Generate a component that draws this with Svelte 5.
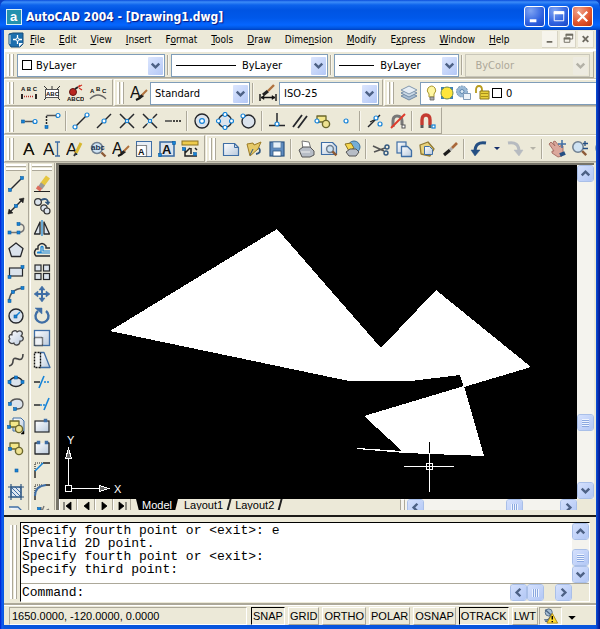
<script>
  const BLUE = '#1583d8';
  const INK = '#26282c';
  const SLATE = '#3f6ea5';
  const STEEL = '#dbe3ec';

  // small builders for the 18x18 toolbar glyphs
  const ln = (d, color = INK, w = 1.5, extra = '') =>
    `<path d="${d}" fill="none" stroke="${color}" stroke-width="${w}" ${extra}/>`;
  const area = (d, fill = STEEL, color = INK, w = 1.3) =>
    `<path d="${d}" fill="${fill}" stroke="${color}" stroke-width="${w}" stroke-linejoin="round"/>`;
  const dot = (x, y) => `<rect x="${x - 1.5}" y="${y - 1.5}" width="3" height="3" fill="${BLUE}" stroke="#0f5c9e" stroke-width=".6"/>`;
  const ring = (x, y, r = 2) => `<circle cx="${x}" cy="${y}" r="${r}" fill="#fff" stroke="${BLUE}" stroke-width="1.2"/>`;
  const circ = (x, y, r, fill = STEEL, color = INK, w = 1.4) =>
    `<circle cx="${x}" cy="${y}" r="${r}" fill="${fill}" stroke="${color}" stroke-width="${w}"/>`;
  const box = (x, y, w, h, fill = STEEL, color = INK, sw = 1.2, extra = '') =>
    `<rect x="${x}" y="${y}" width="${w}" height="${h}" fill="${fill}" stroke="${color}" stroke-width="${sw}" ${extra}/>`;
  const txt = (t, x, y, size, color = '#111', weight = 'bold') =>
    `<text x="${x}" y="${y}" font-size="${size}" font-weight="${weight}" font-family="Liberation Sans, sans-serif" fill="${color}">${t}</text>`;
  const brush = ln('M9 14l4-3', '#222', 3) + ln('M12 11l5-5', '#b0713d', 2) + ln('M6 16l4-2', '#111', 2);
  const lens = (x, y, r) => circ(x, y, r, '#cfe3f3', '#6f7f90', 1.5) + ln(`M${x + r - 1} ${y + r - 1}l4 4`, '#8c5a36', 2.4);
  const blocks = area('M3 4h9v6h-9z', '#f3e789', '#6b672c') + circ(12, 12, 3.6, '#eee291', '#6b672c');

  const icons = {
    textAbove: txt('A B C', 1, 7, 6) + ln('M2 10v5M16 10v5', '#111', 1.8) + ln('M4 12.500h10', '#b8312c', 1.5, 'stroke-dasharray="1 1"'),
    textMask: ln('M1 2l3 3M17 2l-3 3M1 16l3-3M17 16l-3-3M9 2v3', '#333', 1) + box(2.5, 5.5, 13, 8, '#fff', '#555', 1) + txt('ABC', 3, 12, 6),
    textBomb: circ(7, 8, 3.5, '#b92620', '#631713', 1) + ln('M9 5l3-2', '#222', 2) + ln('M12 3l4-2M13 4l3 2M13 1l1 2', '#d32f20', 1.2) + txt('ABCD', 1, 17, 6),
    textArc: ln('M1 15q8-8 16 0', '#666', 1.4) + txt('A', 1, 9, 6) + txt('B', 7, 7, 6) + txt('C', 13, 9, 6),
    textStyle: txt('A', 0, 14, 16, '#111', 'normal') + brush,
    dimStyle: ln('M1 10v7M17 10v7M2 13.500h14', '#111', 1.4) + area('M2 13.500l3-2v4zM16 13.500l-3-2v4z', '#111', '#111', .5) + ln('M4 11l5-4', '#222', 3) + ln('M9 7l6-6', '#b0713d', 2.4),
    layers: area('M1 12l8-4 8 4-8 4z', '#a9bed3', '#718aa5', 1) + area('M1 9l8-4 8 4-8 4z', '#cbd9e6', '#718aa5', 1) + area('M1 6l8-4 8 4-8 4z', '#e7eef5', '#8197ae', 1),

    trackPoint: dot(3, 9.500) + ln('M5 9.500h8', '#555') + ring(15, 9.500),
    snapFrom: ring(15, 3.500) + ln('M13 3.500h-9.500', '#555') + ln('M3.500 4v9', '#222', 1.5, 'stroke-dasharray="2 1"') + dot(3.500, 15),
    snapEnd: ln('M4 14l10-10') + ring(3, 15) + ring(15, 3),
    snapMid: ln('M2 16l14-14') + ring(9, 9),
    snapCross: ln('M2 2l14 14M2 16l14-14') + ring(9, 9, 1.6),
    snapApparent: ln('M2 2l14 14M2 16l4-4M12 6l4-4') + ln('M6 12l6-6', BLUE, 1, 'stroke-dasharray="2 1"') + ring(9, 9, 1.6),
    snapExt: ln('M1 9h7', '#444') + ln('M9 9h8', '#111', 1.5, 'stroke-dasharray="2 1"'),
    snapCenter: circ(9, 9, 7) + ring(9, 9, 2.4),
    snapQuad: circ(9, 9, 6.5) + ring(9, 2.500) + ring(9, 15.500) + ring(2.500, 9) + ring(15.500, 9),
    snapTan: circ(9.500, 9.500, 6.5) + ring(4, 4),
    snapPerp: ln('M9 1v12M1 13.500h16') + ring(9, 12),
    snapPar: ln('M2 15l9-12M7 16l9-12', INK, 1.8),
    snapInsert: blocks + ring(3, 9),
    snapNode: ring(9, 9),
    snapNear: ln('M2 15l12-12') + ln('M10 7l-6 3', '#222', 1.2) + ring(10, 6) + ring(14, 12),
    snapNone: ln('M4 15v-6q0-5 4-5 5 0 5 5v4', '#777', 3) + ln('M2 16l14-14', '#df3c2c', 2) + box(13, 13, 3, 3, '#fff', '#555', 1),
    snapSettings: ln('M4 13v-5q0-5 4-5 4 0 4 5v5', '#c43a30', 3.4) + ln('M4 13v3M12 13v3', '#555', 3) + box(14, 13, 3, 3, '#fff', BLUE, 1.2),

    textMulti: txt('A', 3, 15, 17, '#111', 'normal') + ln('M4 15l5-11 5 11', '#111', 1),
    textSingle: txt('A', 0, 15, 17, '#111', 'normal') + ln('M14.500 2v14M12 2h5M12 16h5', SLATE, 1.3),
    textEdit: txt('A', 0, 15, 17, '#111', 'normal') + ln('M10 13l5-10', '#d8b830', 3) + ln('M8 16l2-3', '#333', 2),
    textFind: lens(8, 8, 5.5) + txt('abc', 2, 10, 8, '#1b3350'),
    textScale: box(1.5, 1.5, 15, 15, '#e7edf4', SLATE, 1) + box(1.5, 5.5, 10, 11, '#fff', '#222', 1.2, 'stroke-dasharray="1 1"') + txt('A', 3, 15, 9),
    textJustify: box(2, 2, 14, 14, STEEL, SLATE, 1.6) + txt('A', 4, 14, 13) + dot(2, 15) + dot(16, 3),
    textSpace: box(1, 1, 16, 4, '#eecb4c', '#8b7220', 1) + ln('M4 8v8h12M4 13l5-5M10 8v6M14 8l2 2', '#222', 1.5) + dot(3, 9) + dot(14, 14),

    newFile: area('M1.500 3.500h11l4 4v8h-15z', 'url(#sheen)', SLATE, 1.2) + ln('M12.500 3.500v4h4', SLATE, 1),
    open: area('M2 4l6-1 1 2 7-3-3 7-8 7z', '#e5c968', '#9b7b27', 1) + ln('M14 8q3 5-3 6', '#31577f', 1.8) + ln('M8 9l-3 6', '#31577f', 1),
    save: box(2, 2, 14, 14, '#5f8cc0', '#2e5683') + box(5, 2, 8, 6, '#e7f1f8', '#5b7fa6', .8) + box(5, 11, 8, 5, '#fff', '#31577f', .8),
    print: area('M5 1l7 1 2 7-8 1z', '#fff', '#777', 1) + area('M2 10l4-3h7l4 4v4l-4 2h-8z', '#b7bdc6', '#555', 1) + ln('M4 12h9', '#eee', 1),
    preview: area('M1.500 2.500h11l4 4v8h-15z', 'url(#sheen)', SLATE, 1.2) + lens(10, 9, 3.4),
    publish: circ(11, 7, 6, '#75add6', '#396f9d', 1) + area('M2 4l6-1 3 5-5 3z', '#f5d64e', '#8b7220', 1) + area('M3 12l4-3h6l3 3-3 4h-7z', '#b7bdc6', '#555', 1),
    cut: ln('M1 6l11 5M2 12l11-4', '#555', 1.6) + circ(15, 7, 2, 'none', '#31577f', 1.4) + circ(14, 13, 2, 'none', '#31577f', 1.4),
    copy: box(2, 2, 9, 11, 'url(#sheen)', SLATE) + area('M6.500 6.500h6l4 4v6h-10z', 'url(#sheen)', SLATE),
    paste: area('M2 5l8-3 6 7-4 7-9-2z', '#e8d27c', '#8f7934') + area('M6.500 6.500h5l3 3v5h-8z', 'url(#sheen)', SLATE, 1),
    match: ln('M3 15l6-5', '#1c1c1c', 3.2) + ln('M9 10l2-2', '#aaa', 3) + ln('M11 8l5-5', '#a9673a', 2.6),
    undo: ln('M16 3q-11-2-11 9', '#254f83', 3) + area('M1 10h9l-5 6z', '#254f83', '#254f83', .5),
    redo: ln('M2 3q11-2 11 9', '#b7bbc0', 3) + area('M8 10h9l-4 6z', '#b7bbc0', '#b7bbc0', .5),
    pan: area('M1 4l2-2 4 4-2-4 2-1 5 6 1-2 2 1 0 6-1 4-4 1-6-4 0-2 2 0z', '#dba79b', '#a16a60', .9) + ln('M12 15l5-2', '#254f83', 4) + ln('M14 0v8M10 4h8', SLATE, 1.5),
    zoomRt: lens(7, 7, 5.2) + ln('M14 1v5M12 3.500h5M12 8.500h5', '#254f83', 1.3),
    zoomWin: lens(8, 8, 6) + box(5, 5, 6, 5, '#fff', SLATE, 1),

    line: ln('M4 14l10-10') + dot(3, 15) + dot(15, 3),
    xline: ln('M3 15l12-12') + area('M1 17l1-5 4 4zM17 1l-1 5-4-4z', '#222', '#222', .5) + dot(9, 9),
    pline: ln('M2 13.500h9M12 5q5 0 5 4t-5 4.500', '#777') + dot(2.500, 13.500) + dot(11.500, 13.500) + dot(11.500, 5),
    polygon: area('M9 2l7 5.500-2.500 8h-9l-2.500-8z'),
    rect: box(2.5, 5, 13, 8) + dot(2.500, 14) + dot(15.500, 4),
    arc: ln('M2 16q1-12 14-13', '#555') + dot(2.500, 16) + dot(6, 7) + dot(15.500, 3),
    circle: circ(9, 9, 7) + ln('M9 9l4-4', BLUE, 1.5) + dot(8.500, 9.500),
    cloud: area('M5 6c-1-5 5-5 5-3 4-3 7 1 4 4 4 1 2 6-1 5 0 5-6 5-6 2-4 2-7-3-4-4-2-3 0-5 2-4z', 'url(#sheen)', '#444'),
    spline: ln('M2 15q4-1 4-5t5-2 5-5', '#444', 1.6),
    ellipse: `<ellipse cx="9" cy="9" rx="6.5" ry="4.500" fill="${STEEL}" stroke="${INK}" stroke-width="1.4"/>` + dot(9, 4.500) + dot(2.500, 9) + dot(15.500, 9),
    ellipseArc: area('M3 8q2-4 7-4 6 0 6 5t-6 5h-1', STEEL, '#555') + dot(3, 9) + dot(8, 14),
    insertBlock: area('M6 1h8l3 3v10h-11z', 'url(#sheen)', SLATE, 1) + blocks + dot(2, 10) + area('M17 14v3h-3z', '#000', '#000', .5),
    makeBlock: blocks + dot(3, 10),
    point: dot(9.500, 9.500),
    hatch: box(4, 4, 10, 10, '#dfe7f0', SLATE) + ln('M4 8l6 6M4 4l10 10M8 4l6 6M12 4l2 2', SLATE, 1) + ln('M4 1v16M14 1v16M1 4h16M1 14h16', '#31577f', 1.2),
    region: area('M2 2h9l4 4v10', 'url(#sheen)', SLATE) + circ(6, 15, 4, '#fff', SLATE),

    erase: ln('M9 10l6-8', '#e6c63f', 5) + ln('M7 13l3-4', '#999', 5) + ln('M5 15l2-3', '#dd6d5d', 5) + ln('M1 16.500h16', '#222', 1.2),
    copyObj: circ(5, 5, 3.4, STEEL, '#333', 1.2) + circ(11, 11, 3.2, STEEL, '#333', 1.2) + circ(14, 14, 3, STEEL, '#333', 1.2) + ln('M8 3q7-3 7 3', '#31577f', 1.8) + area('M12 5h5l-2 3z', '#31577f', '#31577f', .5),
    mirror: area('M7 3v12h-5.500z') + area('M11 3v12h5.500z') + ln('M9 1v16', BLUE, 1.2),
    offset: ln('M17 7h-4v-2q-4-5-8 0v3h-2q-3 4 0 7h14', INK, 1.4) + ln('M17 10h-7v-4q-1-1-2 0v5h-3q-1 1 0 1h12', BLUE, 1.2),
    array: box(2, 2, 6, 6) + box(10.5, 2, 6, 6) + box(2, 10.5, 6, 6) + box(10.5, 10.5, 6, 6),
    move: ln('M9 3v12M3 9h12', SLATE, 2) + area('M9 1l3 4h-6zM9 17l3-4h-6zM1 9l4-3v6zM17 9l-4-3v6z', SLATE, SLATE, .5),
    rotate: ln('M5 4a6.500 6.500 0 1 0 8 0', SLATE, 2.4) + area('M2 1h7v6z', SLATE, SLATE, .5),
    scale: box(1.5, 1.5, 15, 15, 'url(#sheen)', SLATE, 1.3) + box(1.5, 8.5, 8, 8, '#eef2f7', '#111', 1.4, 'stroke-dasharray="1 1"'),
    stretch: area('M7 1.500h4l6 15h-10z', 'url(#sheen)', SLATE) + box(1.5, 1.5, 6, 15, '#f4f5f2', '#111', 1.4, 'stroke-dasharray="2 1"'),
    trim: ln('M1 9h6') + ln('M11 9h6', BLUE, 1.5, 'stroke-dasharray="2 1"') + ln('M6 15l5-12', BLUE, 1.6),
    extend: ln('M1 10h6') + ln('M7 10h6', BLUE, 1.5, 'stroke-dasharray="2 1"') + ln('M11 15l5-12', BLUE, 1.6),
    breakPoint: box(2, 4, 14, 11, 'url(#sheen)') + box(11, 2, 3, 3, SLATE, SLATE, .5),
    breakGap: area('M5 4h-3v11h14v-11h-3', 'url(#sheen)') + box(4, 2, 3, 3, SLATE, SLATE, .5) + box(12, 2, 3, 3, SLATE, SLATE, .5),
    chamfer: ln('M2 17v-7M10 2h7', '#222', 1.4) + ln('M2 10v-8h8', '#222', 1.2, 'stroke-dasharray="1 1"') + ln('M2 10l8-8', BLUE, 1.6),
    fillet: ln('M2 17v-5M12 2h5', '#222', 1.4) + ln('M2 10v-8h8', '#222', 1.2, 'stroke-dasharray="1 1"') + ln('M2 13q0-10 11-11', SLATE, 2),
    explode: ln('M3 10l5-6', '#333', 3) + ln('M9 6l2-5M11 7l5-3M8 5v-3', '#777', 1.4) + dot(6, 4)
  };

  const menus = [
    ['', 'F', 'ile'], ['', 'E', 'dit'], ['', 'V', 'iew'], ['', 'I', 'nsert'], ['F', 'o', 'rmat'], ['', 'T', 'ools'],
    ['', 'D', 'raw'], ['Dime', 'n', 'sion'], ['', 'M', 'odify'], ['E', 'x', 'press'], ['', 'W', 'indow'], ['', 'H', 'elp']
  ];

  // '|' marks a separator, 'v' a drop arrow, 'x' a greyed one
  const bonusText = ['textAbove', 'textMask', 'textBomb', 'textArc'];
  const snaps = ['trackPoint', 'snapFrom', '|', 'snapEnd', 'snapMid', 'snapCross', 'snapApparent', 'snapExt', '|',
    'snapCenter', 'snapQuad', 'snapTan', '|', 'snapPerp', 'snapPar', 'snapInsert', 'snapNode', '|',
    'snapNear', 'snapNone', '|', 'snapSettings'];
  const textTools = ['textMulti', 'textSingle', 'textEdit', 'textFind', 'textStyle', 'textScale', 'textJustify', 'textSpace'];
  const standard = ['newFile', 'open', 'save', '|', 'print', 'preview', 'publish', '|', 'cut', 'copy', 'paste', 'match', '|',
    'undo', 'v', 'redo', 'x', '|', 'pan', 'zoomRt', 'zoomWin'];
  const drawTools = ['line', 'xline', 'pline', 'polygon', 'rect', 'arc', 'circle', 'cloud', 'spline', 'ellipse', 'ellipseArc',
    'insertBlock', 'makeBlock', 'point', 'hatch', 'region'];
  const modifyTools = ['erase', 'copyObj', 'mirror', 'offset', 'array', 'move', 'rotate', 'scale', 'stretch', 'trim', 'extend',
    'breakPoint', 'breakGap', 'chamfer', 'fillet', 'explode'];

  const log = 'Specify fourth point or <exit>: e\nInvalid 2D point.\nSpecify fourth point or <exit>:\nSpecify third point:';

  const arrows = { up: 'M4 10l4-4 4 4', down: 'M4 6l4 4 4-4', left: 'M10 4l-4 4 4 4', right: 'M6 4l4 4-4 4' };
  const tabNav = [
    ['First', 'M3 3v8M10 3v8l-5-4z'], ['Previous', 'M10 3v8l-5-4z'],
    ['Next', 'M5 3v8l5-4z'], ['Last', 'M4 3v8l5-4zM11 3v8']
  ];

  let modes = $state([
    { name: 'SNAP', on: true }, { name: 'GRID', on: false }, { name: 'ORTHO', on: false }, { name: 'POLAR', on: false },
    { name: 'OSNAP', on: false }, { name: 'OTRACK', on: true }, { name: 'LWT', on: false }
  ]);
  let layout = $state('Model');
  let command = $state('');
</script>

{#snippet tool(name)}
  {#if name === '|'}
    <span class="sep"></span>
  {:else if name === 'v' || name === 'x'}
    <button class="drop" aria-label="More" disabled={name === 'x'}><svg viewBox="0 0 6 4"><path d="M0 0h6l-3 3z" /></svg></button>
  {:else}
    <button class="tool" aria-label={name}>
      <svg viewBox="0 0 18 18">{@html icons[name]}</svg>
    </button>
  {/if}
{/snippet}

{#snippet combo(label, value, kind, disabled = false)}
  <label class="combo {kind}" class:disabled>
    {#if kind === 'color'}<span class="swatch"></span>{/if}
    {#if kind === 'linetype' || kind === 'weight'}<span class="rule"></span>{/if}
    {#if kind === 'layer'}
      <svg class="states" viewBox="0 0 66 18" aria-hidden="true">
        <path d="M4 10q-3-3-1-6 4-4 7 0 2 3-1 6v3h-5z" fill="#fff6a0" stroke="#a99632" />
        <path d="M5 13h4v3h-4z" fill="#aaa" stroke="#666" stroke-width=".8" />
        <path d="M16 3h3v3h-3zM25 3h3v3h-3zM16 12h3v3h-3zM25 12h3v3h-3z" fill="#3a7fbe" />
        <circle cx="22" cy="9" r="6" fill="#ffe53b" stroke="#6f8a4a" />
        <circle cx="37" cy="7.500" r="5.500" fill="#9ab9d6" stroke="#6f91b3" stroke-dasharray="2 1" />
        <circle cx="37" cy="7.500" r="2" fill="#dce9f3" stroke="#5f88b0" />
        <path d="M38.500 9.500h7v6h-7z" fill="#edf3f8" stroke="#7f9bb8" />
        <path d="M51 9v-3q0-4 3-4t3 4v4" fill="none" stroke="#b79b1c" stroke-width="1.800" />
        <path d="M55 7h9v8h-9z" fill="#e8d03b" stroke="#8b7718" />
        <path d="M56 9.500h7M56 12.500h7" stroke="#a98f1c" />
      </svg>
      <span class="swatch"></span>
    {/if}
    <select aria-label={label} {disabled}><option>{value}</option></select>
    <span class="chevron"><svg viewBox="0 0 16 16"><path d={arrows.down} /></svg></span>
  </label>
{/snippet}

{#snippet arrow(dir)}
  <button class="sb" aria-label="Scroll {dir}"><svg viewBox="0 0 16 16"><path d={arrows[dir]} /></svg></button>
{/snippet}

<svg class="defs" aria-hidden="true">
  <defs>
    <linearGradient id="sheen" x1="0" y1="0" x2="1" y2="1">
      <stop offset="0" stop-color="#fff" />
      <stop offset="1" stop-color="#b9c9dc" />
    </linearGradient>
  </defs>
</svg>

<div class="window">
  <header class="title-bar">
    <svg class="app-icon" viewBox="0 0 16 16">
      <rect x=".5" y=".5" width="15" height="15" fill="#2492ae" stroke="#d9f1f6" />
      <text x="4" y="12" font-size="13" font-weight="bold" fill="#fff">a</text>
    </svg>
    <h1>AutoCAD 2004 - [Drawing1.dwg]</h1>
    <button class="cap" aria-label="Minimize"><svg viewBox="0 0 20 20"><path d="M5 14.500h7" stroke-width="3" /></svg></button>
    <button class="cap" aria-label="Maximize"><svg viewBox="0 0 20 20"><path d="M5.500 5v9.500h10v-9.500z" stroke-width="1" /><path d="M5 6h11" stroke-width="3" /></svg></button>
    <button class="cap close" aria-label="Close"><svg viewBox="0 0 20 20"><path d="M5 5l10 10M15 5l-10 10" stroke-width="2.400" /></svg></button>
  </header>

  <div class="client">
    <nav class="menu-bar">
      <svg class="doc-icon" viewBox="0 0 16 16">
        <path d="M1 2l4-1h10v11l-3 3h-9l-2-3z" fill="#1c6fae" stroke="#174d79" />
        <path d="M2 3v9" stroke="#79a8c8" stroke-width="2" />
        <path d="M9.500 3v9M5 7.500h9" stroke="#fff" stroke-width="1.300" />
        <circle cx="9.500" cy="7.500" r="1.500" fill="#1c6fae" stroke="#fff" />
        <path d="M15 11l-4 4v-4z" fill="#fff" />
      </svg>
      {#each menus as [pre, key, post]}
        <button class="menu">{pre}<u>{key}</u>{post}</button>
      {/each}
      <span class="mdi">
        <button aria-label="Minimize drawing"><svg viewBox="0 0 16 16"><path d="M5 11h6" stroke-width="2" /></svg></button>
        <button aria-label="Restore drawing"><svg viewBox="0 0 16 16"><path d="M6.500 6v-3h7v5h-3M4.500 7v4.500h6v-4.500z" /><path d="M6 3.500h8M4 7.500h7" stroke-width="2" /></svg></button>
        <button aria-label="Close drawing"><svg viewBox="0 0 16 16"><path d="M5 5l6 6M11 5l-6 6" stroke-width="2" /></svg></button>
      </span>
    </nav>

    <div class="row">
      <div class="toolbar props">
        <span class="grip"></span>
        {@render combo('Color', 'ByLayer', 'color')}
        <span class="sep"></span>
        {@render combo('Linetype', 'ByLayer', 'linetype')}
        <span class="sep"></span>
        {@render combo('Lineweight', 'ByLayer', 'weight')}
        <span class="sep"></span>
        {@render combo('Plot style', 'ByColor', 'plot', true)}
      </div>
    </div>

    <div class="row">
      <div class="toolbar">
        <span class="grip"></span>
        {#each bonusText as name}{@render tool(name)}{/each}
      </div>
      <div class="toolbar">
        <span class="grip"></span>
        {@render tool('textStyle')}
        {@render combo('Text style', 'Standard', 'style')}
        <span class="sep"></span>
        {@render tool('dimStyle')}
        {@render combo('Dimension style', 'ISO-25', 'style')}
      </div>
      <div class="toolbar fill">
        <span class="grip"></span>
        {@render tool('layers')}
        {@render combo('Layer', '0', 'layer')}
      </div>
    </div>

    <div class="row">
      <div class="toolbar">
        <span class="grip"></span>
        {#each snaps as name}{@render tool(name)}{/each}
      </div>
    </div>

    <div class="row">
      <div class="toolbar">
        <span class="grip"></span>
        {#each textTools as name}{@render tool(name)}{/each}
      </div>
      <div class="toolbar fill">
        <span class="grip"></span>
        {#each standard as name}{@render tool(name)}{/each}
      </div>
    </div>

    <main class="work">
      <div class="palette">
        <span class="grip"></span>
        {#each drawTools as name}{@render tool(name)}{/each}
      </div>
      <div class="palette">
        <span class="grip"></span>
        {#each modifyTools as name}{@render tool(name)}{/each}
      </div>

      <section class="drawing">
        <svg class="model" viewBox="59 165 518 334" preserveAspectRatio="xMinYMin slice" shape-rendering="crispEdges">
          <g fill="#fff">
            <path d="M110 331L277 229L381 348L436 290L531 367L464 387L460 375L411 381H349z" />
            <path d="M464 386L484 456L405 453L357 449V448L402 451L364 416z" />
          </g>
          <!-- crosshair -->
          <g fill="none" stroke="#fff">
            <path d="M404 466.500h22M433 466.500h21M429.500 453v10M429.500 470v22" />
            <path d="M426.500 463.500h6v6h-6zM427 466.500h5M429.500 464v5" />
            <path d="M429.500 442v11" stroke="#000" />
          </g>
          <!-- UCS icon -->
          <g fill="none" stroke="#fff">
            <path d="M65.500 485.500h6v6h-6zM68.500 485v-27M72 488.500h28" />
            <path d="M65.500 458.500h6l-3-10zM99.500 485.500v6l9-3z" fill="#666" />
          </g>
          <g fill="#fff" font-size="11">
            <text x="67" y="444">Y</text>
            <text x="114" y="493">X</text>
          </g>
        </svg>
        <div class="vscroll">
          {@render arrow('up')}
          <span class="track far"></span>
          <span class="thumb"></span>
          <span class="track"></span>
          {@render arrow('down')}
        </div>
        <div class="tabs">
          {#each tabNav as [label, d]}
            <button class="tab-nav" aria-label="{label} layout"><svg viewBox="0 0 14 14"><path {d} fill="#000" stroke="#000" stroke-width=".8" /></svg></button>
          {/each}
          <div class="tab-list">
            {#each ['Model', 'Layout1', 'Layout2'] as name}
              <button class="tab" class:active={layout === name} onclick={() => (layout = name)}>{name}</button>
            {/each}
          </div>
          <div class="hscroll">
            <span class="split"></span>
            {@render arrow('left')}
            <span class="track far"></span>
            <span class="thumb"></span>
            <span class="track"></span>
            {@render arrow('right')}
          </div>
        </div>
      </section>
    </main>

    <section class="console">
      <span class="grip"></span>
      <div class="terminal">
        <div class="history">
          <pre>{log}</pre>
          <div class="vscroll">
            {@render arrow('up')}
            <span class="track far"></span>
            <span class="thumb"></span>
            {@render arrow('down')}
          </div>
        </div>
        <div class="prompt">
          <label for="cmd">Command:</label>
          <input id="cmd" type="text" bind:value={command} />
          <div class="hscroll">
            {@render arrow('left')}
            <span class="thumb"></span>
            <span class="track"></span>
            {@render arrow('right')}
          </div>
        </div>
      </div>
    </section>

    <footer class="status">
      <output>1650.0000, -120.0000, 0.0000</output>
      <div class="modes">
        {#each modes as mode}
          <button class="mode" class:on={mode.on} aria-pressed={mode.on} onclick={() => (mode.on = !mode.on)}>{mode.name}</button>
        {/each}
      </div>
      <button class="tray" aria-label="Communication Center">
        <svg viewBox="0 0 18 18">
          <circle cx="7" cy="5" r="4" fill="#a9bfd4" stroke="#4c6683" />
          <path d="M3 2l8 7M2 13q6 2 7-5M3 15h6" fill="none" stroke="#4c6683" stroke-width="1.500" />
          <path d="M11 6l6 11h-12z" fill="#ffd92e" stroke="#a5841a" stroke-linejoin="round" />
          <path d="M11 9v4M11 14.500v1.500" stroke="#000" stroke-width="1.600" />
        </svg>
      </button>
      <button class="drop big" aria-label="Status bar menu"><svg viewBox="0 0 6 4"><path d="M0 0h6l-3 3z" /></svg></button>
    </footer>
  </div>
</div>

<style>
  :global(body) {
    background: #0a3fc4;
  }

  * {
    box-sizing: border-box;
  }

  button, select, input {
    font: inherit;
    color: inherit;
    margin: 0;
    padding: 0;
    border: 0;
    background: none;
    border-radius: 0;
  }

  svg {
    display: block;
  }

  .defs {
    position: absolute;
    width: 0;
    height: 0;
  }

  .window {
    height: 100vh;
    display: flex;
    flex-direction: column;
    font: 10px/13px "DejaVu Sans Condensed", "DejaVu Sans", sans-serif;
    color: #000;
    background: linear-gradient(90deg, #0019cf, #0f5ff0 2px, #0855dd 4px, #0855dd calc(100% - 4px), #0a3fc4 calc(100% - 3px), #00138c);
    border-radius: 7px 7px 0 0;
    overflow: hidden;
  }

  /* title bar */
  .title-bar {
    flex: none;
    display: flex;
    align-items: center;
    gap: 3px;
    height: 30px;
    padding: 3px 7px 0 6px;
    background: linear-gradient(180deg, #0a4ddb 0, #3c8cf8 2px, #0d63ec 5px, #0054e3 10px, #0058ea 18px, #0566ff 25px, #0056e0 28px, #003fc0 30px);
  }

  .app-icon {
    width: 16px;
    height: 16px;
    font-family: "Liberation Sans", sans-serif;
  }

  h1 {
    flex: 1;
    margin: 0 0 0 1px;
    font: bold 12px/18px "DejaVu Sans Condensed", "DejaVu Sans", sans-serif;
    color: #fff;
    text-shadow: 1px 1px 1px #0a1883;
    white-space: nowrap;
  }

  .cap {
    width: 21px;
    height: 21px;
    border: 1px solid #fff;
    border-radius: 3px;
    background: radial-gradient(circle at 30% 20%, #7fa4f2, #2f62e0 60%, #1846c4);
  }

  .cap.close {
    background: radial-gradient(circle at 30% 20%, #f0a48c, #e0532c 60%, #b93310);
  }

  .cap svg {
    width: 19px;
    height: 19px;
    fill: none;
    stroke: #fff;
  }

  .client {
    flex: 1;
    min-height: 0;
    display: flex;
    flex-direction: column;
    margin: 0 4px 4px;
    background: #ece9d8;
  }

  /* menu */
  .menu-bar {
    flex: none;
    display: flex;
    align-items: center;
    height: 21px;
    padding-left: 4px;
    border-bottom: 2px solid #fff;
  }

  .doc-icon {
    width: 16px;
    height: 16px;
    margin-right: 1px;
  }

  .menu {
    padding: 0 0 0 5px;
    margin-right: 9px;
  }

  u {
    text-underline-offset: 1px;
  }

  .mdi {
    display: flex;
    gap: 2px;
    margin-left: auto;
    padding-right: 2px;
  }

  .mdi button {
    width: 16px;
    height: 17px;
    background: #f6f4ec;
    border-right: 1px solid #d8d4c4;
    border-bottom: 1px solid #d8d4c4;
  }

  .mdi svg {
    width: 15px;
    height: 16px;
    fill: none;
    stroke: #6f6c62;
  }

  /* toolbars */
  .row {
    flex: none;
    display: flex;
    gap: 1px;
    height: 28px;
    overflow: hidden;
    border-bottom: 1px solid #c9c5b4;
  }

  .toolbar {
    flex: none;
    display: flex;
    align-items: center;
    padding: 1px 3px 0 2px;
    border: 1px solid;
    border-color: #fff #aca899 #aca899 #fff;
  }

  .toolbar.fill {
    flex: 1 0 0;
    min-width: 0;
    padding-right: 0;
    border-right: 0;
  }

  .toolbar.props {
    flex: 1;
    margin-right: 2px;
  }

  .grip {
    flex: none;
    width: 7px;
    height: 22px;
    margin-right: 3px;
    background: linear-gradient(90deg, #fff 2px, #aca899 2px 3px, #ece9d8 3px 4px, #fff 4px 6px, #aca899 6px);
  }

  .sep {
    flex: none;
    width: 2px;
    height: 20px;
    margin: 0 2px;
    border-left: 1px solid #aca899;
    border-right: 1px solid #f8f6ee;
  }

  .tool {
    flex: none;
    width: 23px;
    height: 22px;
    display: grid;
    place-items: center;
  }

  .tool svg {
    width: 18px;
    height: 18px;
  }

  .drop {
    flex: none;
    width: 13px;
    height: 22px;
    fill: #152f6b;
  }

  .drop:disabled {
    fill: #b5b3a8;
  }

  .drop svg {
    width: 6px;
    height: 4px;
    margin: auto;
  }

  .drop.big svg {
    width: 8px;
    height: 5px;
  }

  .combo {
    flex: 0 0 100px;
    position: relative;
    display: flex;
    align-items: center;
    height: 23px;
    padding-left: 4px;
    border: 1px solid #7f9db9;
    background: #fff;
    font-size: 11px;
  }

  .combo.color {
    flex: 150 0 0;
  }

  .combo.linetype {
    flex: 160 0 0;
  }

  .combo.weight {
    flex: 126 0 0;
  }

  .combo.plot {
    flex: 120 0 0;
    padding-left: 9px;
  }

  .combo.layer {
    flex: 1 0 0;
    border-right: 0;
    gap: 2px;
  }

  .combo.disabled {
    color: #aca899;
    background: #ece9d8;
    border-color: #c9c7ba;
  }

  .combo select {
    flex: 1;
    min-width: 0;
    height: 100%;
    padding-left: 0;
    appearance: none;
    opacity: 1;
  }

  .combo.layer .chevron {
    display: none;
  }

  .swatch {
    flex: none;
    width: 10px;
    height: 10px;
    margin-right: 4px;
    border: 1px solid #000;
  }

  .combo.layer .swatch {
    margin: 0 2px 0 -1px;
  }

  .states {
    flex: none;
    width: 66px;
    height: 18px;
  }

  .rule {
    flex: none;
    width: 60px;
    height: 1px;
    margin-right: 6px;
    background: #000;
  }

  .combo.weight .rule {
    width: 35px;
  }

  .chevron {
    position: absolute;
    top: 2px;
    right: 1px;
    bottom: 1px;
    width: 15px;
    display: grid;
    place-items: center;
    border-radius: 1px;
    background: linear-gradient(135deg, #dce6fe, #b4c8f6);
    pointer-events: none;
  }

  .disabled .chevron {
    background: #f1efe4;
    filter: grayscale(1);
    opacity: 0.4;
  }

  .chevron svg, .sb svg {
    width: 15px;
    height: 15px;
    fill: none;
    stroke: #4d6185;
    stroke-width: 2.6;
  }

  /* drawing area */
  .work {
    flex: 1;
    min-height: 0;
    display: flex;
    overflow: hidden;
  }

  .palette {
    flex: none;
    width: 25px;
    margin-right: 1px;
    padding-right: 1px;
    display: flex;
    flex-direction: column;
    align-items: center;
    overflow: hidden;
    border-left: 1px solid #fff;
    border-right: 1px solid #aca899;
  }

  .palette .grip {
    width: 20px;
    height: 7px;
    margin: 1px 0 2px;
    background: linear-gradient(180deg, #fff 2px, #aca899 2px 3px, #ece9d8 3px 4px, #fff 4px 6px, #aca899 6px);
  }

  .palette .tool {
    flex: none;
  }

  .drawing {
    flex: 1;
    min-width: 0;
    display: grid;
    grid-template: minmax(0, 1fr) 11px / minmax(0, 1fr) 17px;
    margin-right: 2px;
    border-top: 2px solid #77746a;
    border-left: 3px solid #77746a;
    background: #ece9d8;
  }

  .model {
    width: 100%;
    height: 100%;
    background: #000;
    font-family: "Liberation Sans", sans-serif;
  }

  .vscroll, .hscroll {
    display: flex;
    background: #f4f3ee;
  }

  .vscroll {
    flex-direction: column;
    width: 17px;
  }

  .sb, .thumb {
    flex: none;
    width: 17px;
    height: 17px;
    border: 1px solid #fff;
    outline: 1px solid #a9bfe8;
    outline-offset: -1px;
    border-radius: 3px;
    background: linear-gradient(135deg, #d4e0fd, #b2c7f5);
  }

  .thumb::after {
    content: '';
    display: block;
    width: 7px;
    height: 8px;
    margin: 4px;
    background: repeating-linear-gradient(180deg, #eef4fe 0 1px, #8ba8e0 1px 2px);
  }

  .hscroll .thumb::after {
    background: repeating-linear-gradient(90deg, #eef4fe 0 1px, #8ba8e0 1px 2px);
  }

  .track {
    flex: 51;
  }

  .track.far {
    flex: 234;
  }

  .tabs {
    grid-column: 1 / -1;
    display: flex;
    overflow: hidden;
    padding-right: 17px;
    font: 11px/12px "Liberation Sans", sans-serif;
  }

  .tab-nav {
    flex: none;
    width: 18px;
    height: 14px;
    border-right: 1px solid #aca899;
    border-left: 1px solid #fff;
  }

  .tab-nav svg {
    width: 14px;
    height: 14px;
    margin: auto;
  }

  .tab-list {
    flex: 1;
    display: flex;
    padding-left: 5px;
  }

  .tab {
    position: relative;
    height: 12px;
    padding: 0 6px;
  }

  .tab::after {
    content: '';
    position: absolute;
    top: 0;
    right: -1px;
    width: 2px;
    height: 12px;
    background: #222;
    transform: skewX(-15deg);
  }

  .tab.active {
    color: #fff;
    background: #000;
    clip-path: polygon(0 0, 100% 0, calc(100% - 3px) 100%, 3px 100%);
  }

  .tabs .hscroll {
    flex: 0 0 177px;
    height: 17px;
  }

  .tabs .track.far {
    flex: 83;
  }

  .tabs .track {
    flex: 37;
  }

  .split {
    width: 5px;
    margin-right: 2px;
    border: 1px solid;
    border-color: #fff #aca899 #fff #aca899;
  }

  /* command window */
  .console {
    flex: none;
    display: flex;
    gap: 3px;
    margin-top: 5px;
    padding: 5px 6px 1px;
    border-top: 2px solid #1c1b18;
    border-bottom: 2px solid #aca899;
  }

  .console .grip {
    height: auto;
    margin: 3px 0;
  }

  .terminal {
    flex: 1;
    min-width: 0;
    border: 1px solid;
    border-color: #000 #fff #fff #000;
    background: #fff;
    font: 13px/13px "Liberation Mono", monospace;
  }

  .history {
    display: flex;
    height: 61px;
    border-bottom: 1px solid #aca899;
  }

  pre {
    flex: 1;
    margin: 0;
    padding: 1px 0 0 1px;
    font: inherit;
  }

  .console .track {
    flex: 1;
  }

  .prompt {
    display: flex;
    height: 17px;
    align-items: center;
    padding-left: 1px;
  }

  .prompt input {
    flex: 1;
    min-width: 0;
    outline: 0;
  }

  .prompt .hscroll {
    width: 79px;
    padding-right: 17px;
    background: #ece9d8;
  }

  /* status bar */
  .status {
    flex: none;
    display: flex;
    align-items: center;
    height: 20px;
    padding-left: 5px;
    border-top: 1px solid #fff;
    font: 11px/14px "Liberation Sans", sans-serif;
  }

  output {
    flex: 0 1 238px;
    height: 18px;
    padding: 1px 2px;
    border: 1px solid;
    border-color: #aca899 #fff #fff #aca899;
    white-space: nowrap;
  }

  .modes {
    display: flex;
    gap: 3px;
    margin-left: 4px;
  }

  .mode {
    height: 18px;
    padding: 0 1px;
    border: 1px solid;
    border-color: #fff #aca899 #aca899 #fff;
  }

  .mode.on {
    border-color: #000 #fff #fff #000;
  }

  .tray {
    width: 23px;
    height: 18px;
    margin-left: 1px;
    border: 1px solid;
    border-color: #aca899 #fff #fff #aca899;
  }

  .tray svg {
    width: 17px;
    height: 16px;
    margin: auto;
  }

  .drop.big {
    width: 20px;
    height: 16px;
    padding-top: 5px;
    fill: #000;
  }
</style>
